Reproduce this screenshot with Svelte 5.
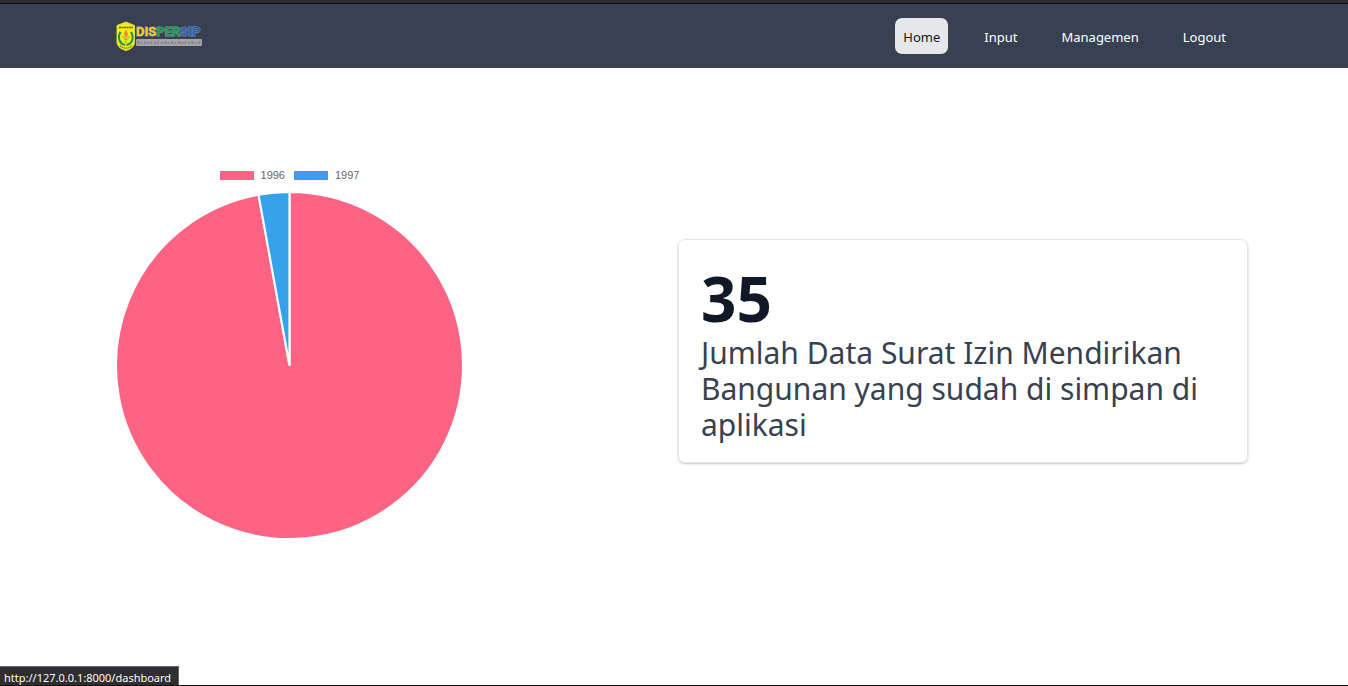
<script>
    const links = [
        { label: "Home", href: "/dashboard", active: true },
        { label: "Input", href: "/input" },
        { label: "Managemen", href: "/managemen" },
        { label: "Logout", href: "/logout" },
    ];

    const slices = [
        { year: "1996", total: 34, color: "#ff6384" },
        { year: "1997", total: 1, color: "#36a2eb" },
    ];

    const total = slices.reduce((sum, s) => sum + s.total, 0);
    const statusUrl = "http://127.0.0.1:8000/dashboard";

    // clockwise from 12 o'clock
    const point = (part) => {
        const a = part * 2 * Math.PI;
        return `${100 + 100 * Math.sin(a)} ${100 - 100 * Math.cos(a)}`;
    };

    let start = 0;
    const paths = slices.map((s) => {
        const end = start + s.total / total;
        const large = end - start > 0.5 ? 1 : 0;
        const d = `M100 100 L${point(start)} A100 100 0 ${large} 1 ${point(end)} Z`;
        start = end;
        return { d, color: s.color };
    });

    // widths of the small marks under the logo name
    const marks = [3, 2, 3, 3, 2, 3, 2, 3, 3, 2, 3, 2, 3, 3, 2, 3, 3, 2, 3];
</script>

<div class="page">
    <header>
        <nav class="container">
            <a class="brand" href="/dashboard" aria-label="Dispersip">
                <svg width="86" height="30" viewBox="0 0 86 30">
                    <path d="M10 1 L18.5 4.5 V21 C18.5 26 14 28.5 10 29.5 C6 28.5 1 26 1 21 V4.5 Z" fill="#f7ea1c" stroke="#e3d545" />
                    <path d="M3 6.5 H17" stroke="#55651f" stroke-width="1.6" stroke-dasharray="2 .5" />
                    <path d="M4.5 11 C1 17 4 23 9 24 M15 11 C18.5 17 16 23 10.5 24" fill="none" stroke="#16964a" stroke-width="2" />
                    <path d="M10 8.5 L12 12.5 L11 16 H9 L8 12.5 Z" fill="#e98a3c" />
                    <path d="M6.5 15 L9 18.5 H11 L13.5 15 M10 16 V22" fill="none" stroke="#a8a03c" stroke-width="1" />
                    <path d="M4 24.5 C7 28 13 28 16 24.5" fill="none" stroke="#6d7a30" stroke-width="1.2" stroke-dasharray="1.5 .6" />
                    <text x="20" y="15" class="brand-text"><tspan fill="#fcc91c">DIS</tspan><tspan fill="#12a04b">PER</tspan><tspan fill="#2562b8">SIP</tspan></text>
                    <rect x="20" y="18" width="66" height="7" rx="1" fill="#a3a5a9" />
                    {#each marks as w, i}
                        <rect x={21 + i * 3.4} y={20 + (i % 2)} width={w * 0.8} height={3 - (i % 2)} fill="#85888e" />
                    {/each}
                </svg>
            </a>
            <ul>
                {#each links as link}
                    <li><a href={link.href} class:active={link.active}>{link.label}</a></li>
                {/each}
            </ul>
        </nav>
    </header>

    <main class="container">
        <section class="chart">
            <div class="legend">
                {#each slices as s}
                    <span class="legend-item"><i style="background: {s.color}"></i>{s.year}</span>
                {/each}
            </div>
            <svg class="pie" viewBox="0 0 200 200" role="img" aria-label="Data per tahun">
                {#each paths as p}
                    <path d={p.d} fill={p.color} stroke="#fff" stroke-width="1.2" />
                {/each}
            </svg>
        </section>

        <section class="card">
            <h1>{total}</h1>
            <p>Jumlah Data Surat Izin Mendirikan Bangunan yang sudah di simpan di aplikasi</p>
        </section>
    </main>

    <div class="status">{statusUrl}</div>
</div>

<style>
    :global(body) {
        margin: 0;
        background: #fff;
        font-family: "Segoe UI", "Noto Sans", sans-serif;
    }

    .page {
        box-sizing: border-box;
        min-height: 100vh;
        border-top: 3px solid #2b2a33;
        border-bottom: 1px solid #111;
    }

    .container {
        box-sizing: border-box;
        max-width: 1148px;
        margin: 0 auto;
    }

    header {
        background: #374151;
        border-top: 1px solid #0c0c0d;
    }

    nav {
        display: flex;
        align-items: center;
        justify-content: space-between;
        min-height: 64px;
        padding: 0 14px 0 16px;
    }

    .brand {
        display: flex;
    }

    .brand-text {
        font: bold 13px Roboto, sans-serif;
        stroke: #8b95a5;
        stroke-width: 1px;
        paint-order: stroke;
    }

    ul {
        display: flex;
        gap: 28px;
        margin: 0;
        padding: 0;
        list-style: none;
    }

    li a {
        display: block;
        padding: 9px 8px 7px;
        border-radius: 7px;
        color: #fff;
        font-size: 13px;
        line-height: 20px;
        text-decoration: none;
    }

    li a.active {
        background: #e5e7eb;
        color: #111827;
    }

    main {
        display: grid;
        grid-template-columns: 1fr 1fr;
        gap: 8px;
        align-items: center;
        padding: 94px 0;
    }

    .chart {
        width: 347px;
        max-width: 100%;
        box-sizing: border-box;
        margin-left: 16px;
    }

    .legend {
        display: flex;
        justify-content: center;
        gap: 9px;
        padding: 7px 0 10px;
        color: #666;
        font: 11px/13px "Liberation Sans", Arial, sans-serif;
    }

    .legend-item {
        display: flex;
        align-items: center;
        gap: 7px;
    }

    .legend-item i {
        width: 34px;
        height: 9px;
    }

    .pie {
        display: block;
        width: 100%;
    }

    .card {
        padding: 23px 22px 19px;
        border: 1px solid #e5e7eb;
        border-radius: 7px;
        box-shadow: 0 1px 3px rgba(0, 0, 0, 0.1), 0 1px 2px rgba(0, 0, 0, 0.15);
    }

    h1 {
        margin: 0 0 2px;
        color: #111827;
        font-size: 62px;
        line-height: 70px;
    }

    .card p {
        margin: 0;
        color: #374151;
        font-size: 30px;
        line-height: 36px;
    }

    .status {
        position: fixed;
        left: 0;
        bottom: 1px;
        padding: 3px 7px 0 4px;
        border-top: 1px solid #66666b;
        border-right: 1px solid #66666b;
        background: #2e2d30;
        color: #fbfbfe;
        font-size: 11px;
        line-height: 15px;
    }

    @media (max-width: 768px) {
        main {
            grid-template-columns: 1fr;
            gap: 32px;
            padding: 32px 16px;
        }

        .chart {
            margin: 0 auto;
        }

        ul {
            gap: 4px;
        }
    }
</style>
